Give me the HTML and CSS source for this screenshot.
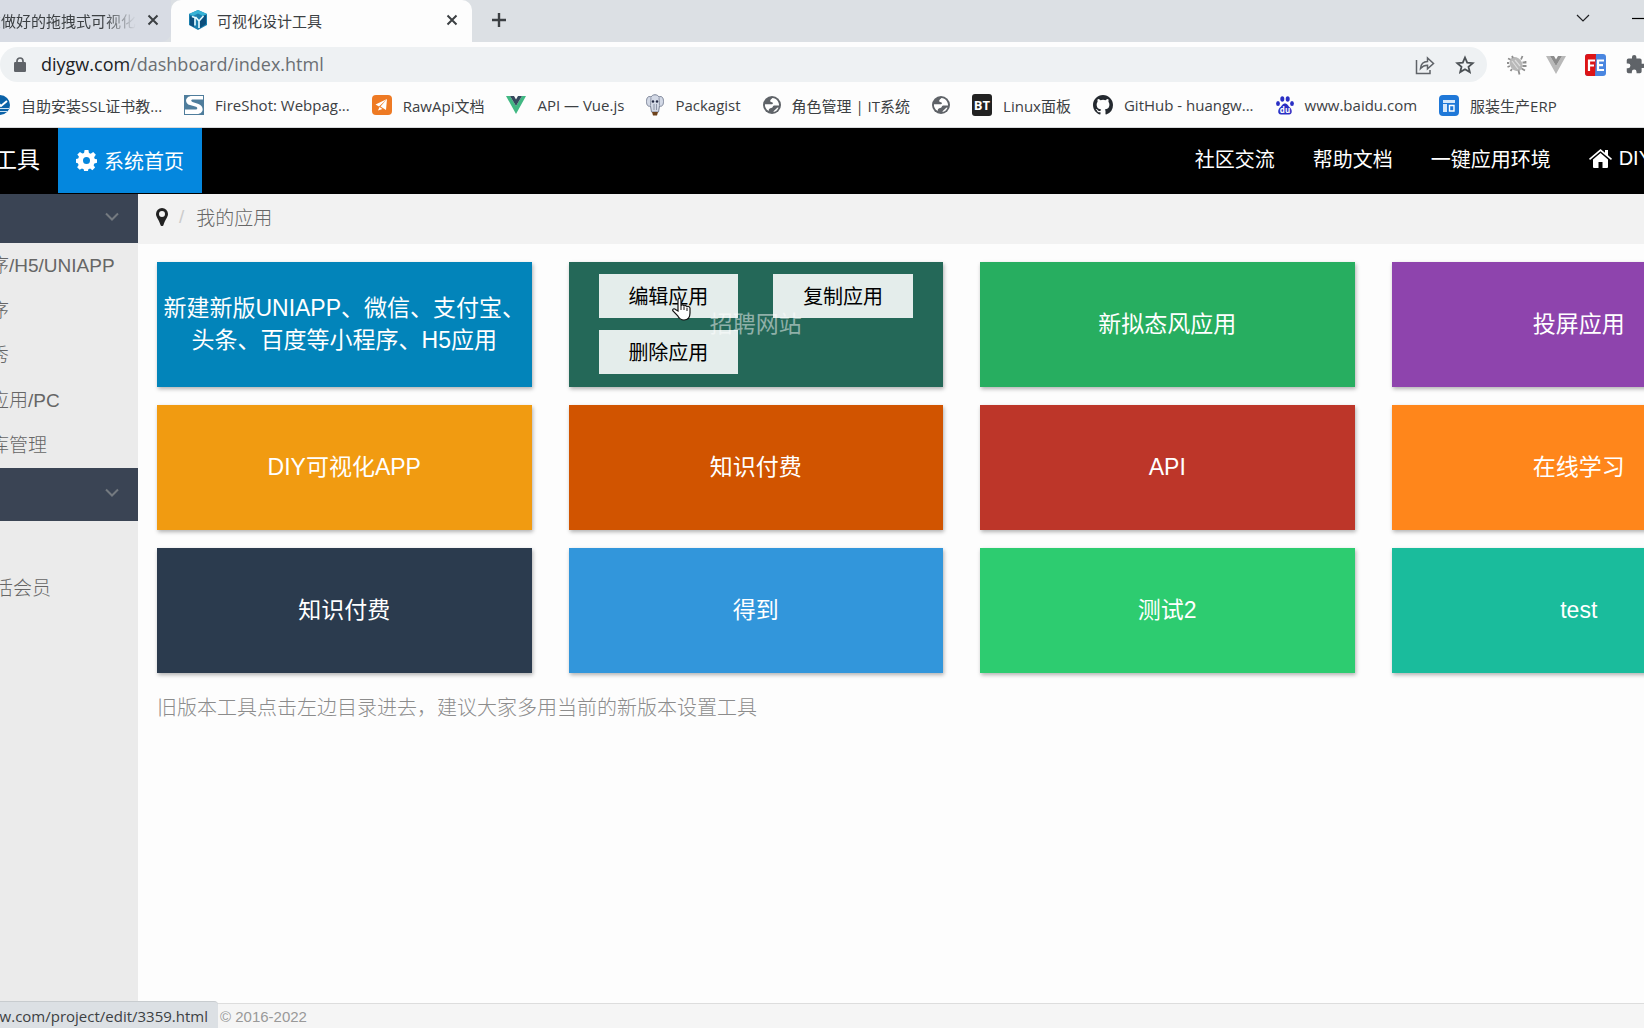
FILE: index.html
```html
<!DOCTYPE html>
<html lang="zh-CN">
<head>
<meta charset="utf-8">
<title>可视化设计工具</title>
<link rel="stylesheet" href="styles.css">
</head>
<body>
<svg class="defs" aria-hidden="true">
  <symbol id="cross" viewBox="0 0 12 12"><path d="M1.500 1.500l9 9M10.500 1.500l-9 9" stroke="#3c4043" stroke-width="2"/></symbol>
  <symbol id="globe" viewBox="0 0 20 20"><circle cx="10" cy="10" r="10" fill="#5f6368"/><path d="M10.500 2.200c-1 1.200-2.800 2.200-2.500 3.500.3 1.200 1.800.6 2.600 1.500.8 1 .4 1.600-.6 2H2.200C1.800 11.500 3 15 6.500 16.800c-.3-1.800.3-2.600 1.500-3.200 1.500-.7 2.700-.6 3-2 .3-1.200 1.700-1 3-1h3.800c.3-3.800-2.800-8.200-7.300-8.400zM11.500 17.800c3-.5 5-2.500 5.800-5-1.200.2-2 .4-2.600 1.400-.6 1-2.400 1.400-3.200 3.600z" fill="#fff"/></symbol>
  <symbol id="chevron" viewBox="0 0 14 10"><path d="M1 1.500l6 6 6-6" fill="none" stroke="currentColor" stroke-width="2"/></symbol>
</svg>

<header class="browser">
  <div class="tabs">
    <div class="tab tab-back">
      <span class="tab-title">在做好的拖拽式可视化</span>
      <button class="icon-btn" aria-label="关闭"><svg width="12" height="12"><use href="#cross"/></svg></button>
    </div>
    <div class="tab tab-front">
      <svg width="20" height="20" viewBox="0 0 20 20"><path d="M10 0l9 4v11l-9 5-9-5V4z" fill="#1b7fae"/><path d="M10 0l9 4-4 2-5-2.500L5 6 1 4z" fill="#36b3d6"/><path d="M2 6l4 2v9l-4-2zM12 11l3-5 3-1v9l-6 4z" fill="#0c4f7d"/><path d="M4 6.500l3 1v8M7.500 7L11 11M11 18v-7l4.500-5" stroke="#e8fbff" stroke-width="1.600" fill="none"/></svg>
      <span class="tab-title">可视化设计工具</span>
      <button class="icon-btn" aria-label="关闭"><svg width="12" height="12"><use href="#cross"/></svg></button>
    </div>
    <button class="icon-btn new-tab" aria-label="新标签页"><svg width="16" height="16" viewBox="0 0 16 16"><path d="M8 1v14M1 8h14" stroke="#3c4043" stroke-width="2.400"/></svg></button>
    <div class="window-btns">
      <button class="icon-btn" aria-label="搜索标签页"><svg width="14" height="9" viewBox="0 0 14 9"><path d="M1 1l6 6 6-6" fill="none" stroke="#202124" stroke-width="1.200"/></svg></button>
      <button class="icon-btn" aria-label="最小化"><svg width="14" height="9" viewBox="0 0 14 9"><path d="M0 4.500h14" stroke="#000" stroke-width="1.200"/></svg></button>
    </div>
  </div>

  <div class="toolbar">
    <div class="omnibox">
      <svg width="12" height="15" viewBox="0 0 12 15"><rect x="0" y="5" width="12" height="10" rx="1.200" fill="#5f6368"/><path d="M3 6V4a3 3 0 0 1 6 0v2" fill="none" stroke="#5f6368" stroke-width="1.700"/></svg>
      <span class="url"><b>diygw.com</b>/dashboard/index.html</span>
      <button class="icon-btn" aria-label="分享"><svg width="20" height="20" viewBox="0 0 20 20"><path d="M1.500 5v13.500H15V15M5.500 13.500c.5-5 3.500-7 7-7V3l6 5.500-6 5.300v-3.500c-3 0-5 1-7 3.200z" fill="none" stroke="#5f6368" stroke-width="1.500"/></svg></button>
      <button class="icon-btn" aria-label="添加书签"><svg width="20" height="20" viewBox="0 0 20 20"><path d="M10 2.500l2.200 5.100 5.500.5-4.200 3.600 1.300 5.400L10 14.200l-4.800 2.900 1.300-5.400L2.300 8.100l5.500-.5z" fill="none" stroke="#4b5054" stroke-width="1.800"/></svg></button>
    </div>
    <div class="extensions">
      <svg width="20" height="20" viewBox="0 0 20 20"><ellipse cx="9" cy="9" rx="6" ry="7.500" fill="#b8b8b8" transform="rotate(-35 9 9)"/><path d="M3.500 4.500L1 3.500M6 3L5 1M14 4.500l1.500-3.500M15.500 7.500h3V6M15.500 11h4M14.500 13.500l3.500 2M11.500 15.500l1 4M3 11l-2.500 1M5 14l-1.500 2M2 8H0" fill="none" stroke="#8e8e8e" stroke-width="1.800"/><path d="M5 6l6 8M8 5l5 6" stroke="#dcdcdc" stroke-width="1.200"/></svg>
      <svg width="20" height="18" viewBox="0 0 20 18"><path d="M0 0h4l6 10 6-10h4L10 18z" fill="#b9b9b9"/><path d="M4 0h4l2 3.500L12 0h4l-6 10z" fill="#8c8c8c"/></svg>
      <svg width="21" height="22" viewBox="0 0 21 22"><rect width="21" height="22" rx="3" fill="#4a86e0"/><path d="M3 0h8l-1 22H3a3 3 0 0 1-3-3V3a3 3 0 0 1 3-3z" fill="#dd1417"/><path d="M4 17V6.500h6M4 11.500h5M19 6.500h-6v9.500h6M13 11.200h5" fill="none" stroke="#fff" stroke-width="2.200"/></svg>
      <svg width="21" height="21" viewBox="0 0 24 24"><path d="M20.500 11H19V7a2 2 0 0 0-2-2h-4V3.500a2.500 2.500 0 0 0-5 0V5H4a2 2 0 0 0-2 2v3.800h1.500a2.700 2.700 0 0 1 0 5.400H2V20a2 2 0 0 0 2 2h3.800v-1.500a2.700 2.700 0 0 1 5.400 0V22H17a2 2 0 0 0 2-2v-4h1.500a2.500 2.500 0 0 0 0-5z" fill="#5f6368"/></svg>
    </div>
  </div>

  <nav class="bookmarks" aria-label="书签">
    <a href="#"><svg width="20" height="20" viewBox="0 0 20 20"><circle cx="10" cy="10" r="10" fill="#0b62a8"/><path d="M2 11l5-4 4 4 6-5" fill="none" stroke="#fff" stroke-width="2"/><path d="M1 13.500h18M2.500 16.500h15" stroke="#cfe3f2"/></svg>自助安装SSL证书教...</a>
    <a href="#"><svg width="20" height="20" viewBox="0 0 20 20"><path d="M0 0h20v20H0z" fill="#4f7d9c"/><path d="M19 1H8C1 1 0 8.500 6 10l6 1.800c2 .8 1.500 2.700-.5 2.700H1V19h12c7 0 7.500-8 1.500-10L8.500 7C6.500 6 7 4.500 9 4.500h10z" fill="#fff"/></svg>FireShot: Webpag...</a>
    <a href="#"><svg width="20" height="20" viewBox="0 0 20 20"><rect width="20" height="20" rx="4" fill="#ee7a24"/><path d="M15 4L3.500 9.500l3.500 2zM15 4L8.500 11.500l5.500 3.500zM6 15.500l1.500-3.500 3 2z" fill="#fff"/></svg>RawApi文档</a>
    <a href="#"><svg width="20" height="18" viewBox="0 0 20 18"><path d="M0 0h4l6 10 6-10h4L10 18z" fill="#41b883"/><path d="M4 0h4l2 3.500L12 0h4l-6 10z" fill="#35495e"/></svg>API — Vue.js</a>
    <a href="#"><svg width="18" height="22" viewBox="0 0 18 22"><path d="M5 3c1.500-3 6.500-3 8 0 3-1.500 4.500 1 4.500 4.500S16 13 13.500 12L12.500 18h-7L4.500 12C2 13 .5 11 .5 7.500S2 1.500 5 3z" fill="#d3d9e6" stroke="#7c8498"/><path d="M5 3.500l-.5 8M13 3.500l.5 8M8 10v6M10.500 10v6" stroke="#7c8498" stroke-width=".8"/><circle cx="7" cy="7.500" r="1.200" fill="#222a44"/><circle cx="11" cy="7.500" r="1.200" fill="#222a44"/><path d="M6 18h6l-1 3.500H7z" fill="#6e421c"/></svg>Packagist</a>
    <a href="#"><svg width="18" height="18"><use href="#globe"/></svg>角色管理 | IT系统</a>
    <a href="#" aria-label="网站"><svg width="18" height="18"><use href="#globe"/></svg></a>
    <a href="#"><svg width="20" height="22" viewBox="0 0 20 22"><rect width="20" height="22" rx="3" fill="#222"/><text x="10" y="16" text-anchor="middle" class="bt">BT</text></svg>Linux面板</a>
    <a href="#"><svg width="20" height="20" viewBox="0 0 16 16"><path fill="#24292f" d="M8 0C3.580 0 0 3.580 0 8c0 3.540 2.290 6.530 5.470 7.590.4.070.55-.17.55-.38 0-.19-.01-.82-.01-1.490-2.010.37-2.530-.49-2.690-.94-.09-.23-.48-.94-.82-1.130-.28-.15-.68-.52-.01-.53.63-.01 1.080.58 1.230.82.72 1.210 1.870.87 2.330.66.070-.52.28-.87.51-1.070-1.780-.2-3.640-.89-3.640-3.950 0-.87.31-1.590.82-2.150-.08-.2-.36-1.020.08-2.120 0 0 .67-.21 2.200.82a7.600 7.600 0 0 1 4 0c1.530-1.040 2.200-.82 2.200-.82.44 1.100.16 1.920.08 2.120.51.56.82 1.270.82 2.150 0 3.070-1.870 3.750-3.650 3.950.29.25.54.73.54 1.480 0 1.070-.01 1.930-.01 2.200 0 .21.15.46.55.38A8 8 0 0 0 16 8c0-4.420-3.580-8-8-8z"/></svg>GitHub - huangw...</a>
    <a href="#"><svg width="18" height="19" viewBox="0 0 18 19"><g fill="#2a2fc4"><ellipse cx="6.300" cy="3" rx="2" ry="2.800"/><ellipse cx="11.700" cy="3" rx="2" ry="2.800"/><ellipse cx="2" cy="7.500" rx="1.900" ry="2.500"/><ellipse cx="16" cy="7.500" rx="1.900" ry="2.500"/><path d="M9 7.500c2.500 0 3 2.500 5 4s3 7-1 7H5c-4 0-3-5.500-1-7s2.500-4 5-4z"/></g><text x="9" y="17" text-anchor="middle" class="du">du</text></svg>www.baidu.com</a>
    <a href="#"><svg width="20" height="21" viewBox="0 0 20 21"><rect width="20" height="21" rx="4" fill="#1f78d8"/><path d="M4 5h12v3H4zM4 9h4v8H4z" fill="#d6e8fb"/><path d="M10.500 10.500h4.500v5.500h-4.500z" fill="none" stroke="#fff" stroke-width="1.400"/></svg>服装生产ERP</a>
  </nav>
</header>

<nav class="topnav">
  <a class="brand" href="#">工具</a>
  <a class="current" href="#"><svg width="21" height="21" viewBox="0 0 24 24"><path fill="#fff" fill-rule="evenodd" d="M9.800 0h4.400l.6 3.400 2 .9L19.700 2.300l3 3.100-2 2.800.8 2 2.500.3v4.200l-3 .6-.9 2 1.700 2.600-3.100 3.100-2.600-1.800-2 .8-.6 3H9.400l-.6-3-2-.8L4.200 22.700 1.300 19.600 3 17l-.9-2-2.100-.5v-4.300l2.500-.5.9-2-1.900-2.600 3-2.900 2.700 1.800 2-.7zM12 8a4 4 0 1 0 0 8 4 4 0 0 0 0-8z"/></svg>系统首页</a>
  <div class="links">
    <a href="#">社区交流</a>
    <a href="#">帮助文档</a>
    <a href="#">一键应用环境</a>
    <a href="#"><svg width="23" height="19" viewBox="0 0 23 19"><path fill="#fff" d="M11.500 4L19 10.500V18a1 1 0 0 1-1 1h-4.500v-6h-4v6H5a1 1 0 0 1-1-1v-7.500zM11.500 0L16 3.700V1h3v5.300L23 9.800l-1 1.200L11.500 2.300 1 11 0 9.800z"/></svg>DIY</a>
  </div>
</nav>

<div class="layout">
  <aside class="sidebar">
    <button class="group-head" aria-label="展开"><svg width="14" height="10"><use href="#chevron"/></svg></button>
    <ul>
      <li><a href="#">序/H5/UNIAPP</a></li>
      <li><a href="#">序</a></li>
      <li><a href="#">秀</a></li>
      <li><a href="#">应用/PC</a></li>
      <li><a href="#">库管理</a></li>
    </ul>
    <button class="group-head group-head-tall" aria-label="展开"><svg width="14" height="10"><use href="#chevron"/></svg></button>
    <ul class="member">
      <li></li>
      <li><a href="#">活会员</a></li>
    </ul>
  </aside>

  <main class="main">
    <div class="crumbs">
      <svg width="12" height="18" viewBox="0 0 12 18"><path fill="#222" fill-rule="evenodd" d="M6 0a6 6 0 0 1 6 6c0 3-3 6-4.500 11a1.600 1.600 0 0 1-3 0C3 12 0 9 0 6a6 6 0 0 1 6-6zm0 3a3 3 0 1 0 0 6 3 3 0 0 0 0-6z"/></svg>
      <i>/</i><span>我的应用</span>
    </div>
    <div class="content">
      <div class="cards">
        <a class="card blue" href="#">新建新版UNIAPP、微信、支付宝、头条、百度等小程序、H5应用</a>
        <div class="card hovered">招聘网站
          <div class="actions">
            <button>编辑应用</button>
            <button>复制应用</button>
            <button>删除应用</button>
          </div>
          <svg class="pointer" width="19" height="24" viewBox="0 0 19 24"><path d="M6 14V3c0-2.500 3-2.500 3 0v6c0-1.500 3-1.500 3 .5 0-1.500 3-1 3 .8 0-1.500 3-1 3 1V16c0 4-2 7-6 7-3.500 0-5-1.500-6.500-4.500L1 14c-1-2 1-3 2.500-1.500z" fill="#fff" stroke="#111" stroke-width="1.200"/><path d="M9 9v4M12 10v3M15 11v3" stroke="#111"/></svg>
        </div>
        <a class="card green" href="#">新拟态风应用</a>
        <a class="card purple" href="#">投屏应用</a>
        <a class="card amber" href="#">DIY可视化APP</a>
        <a class="card rust" href="#">知识付费</a>
        <a class="card red" href="#">API</a>
        <a class="card orange" href="#">在线学习</a>
        <a class="card navy" href="#">知识付费</a>
        <a class="card sky" href="#">得到</a>
        <a class="card mint" href="#">测试2</a>
        <a class="card teal" href="#">test</a>
      </div>
      <p class="note">旧版本工具点击左边目录进去，建议大家多用当前的新版本设置工具</p>
    </div>
    <footer class="footer">© 2016-2022</footer>
  </main>
</div>
<div class="status"><span>w.com/project/edit/3359.html</span></div>
</body>
</html>
```

FILE: styles.css
```css
* { box-sizing: border-box; }

body {
  margin: 0;
  height: 100vh;
  display: flex;
  flex-direction: column;
  overflow: hidden;
  background: #fdfdfd;
  font-family: "Liberation Sans", "Noto Sans CJK SC", sans-serif;
  font-size: 20px;
  font-weight: 300;
}

a { color: inherit; text-decoration: none; }
button { font: inherit; border: 0; margin: 0; padding: 0; background: none; cursor: pointer; }
svg { display: block; flex: none; }
ul { list-style: none; margin: 0; padding: 0; }
.defs { position: absolute; width: 0; height: 0; }

/* Browser chrome */
.browser {
  flex: none;
  font-family: "Open Sans", "Noto Sans CJK SC", sans-serif;
  font-size: 15px;
  font-weight: 400;
  color: #3c4043;
  border-bottom: 1px solid #d8dadc;
}
.tabs { display: flex; height: 42px; background: #dce0e4; }
.tab { display: flex; align-items: center; padding-bottom: 2px; }
.tab-title { white-space: nowrap; overflow: hidden; }
.tab-back { width: 171px; padding-right: 12px; background: #d8dce4; border-bottom-right-radius: 10px; }
.tab-back .tab-title {
  flex: 1;
  margin-right: 11px;
  direction: rtl;
  -webkit-mask-image: linear-gradient(to left, transparent, #000 32px);
  mask-image: linear-gradient(to left, transparent, #000 32px);
}
.tab-front { width: 301px; padding-left: 17px; padding-right: 14px; gap: 9px; background: #fdfdfd; border-radius: 10px 10px 0 0; }
.tab-front .tab-title { flex: 1; }
.icon-btn { display: flex; align-items: center; justify-content: center; }
.new-tab { margin-left: 19px; padding-bottom: 2px; }
.window-btns { display: flex; gap: 42px; height: 36px; margin-left: auto; margin-right: -2px; }

.toolbar { display: flex; align-items: center; height: 45px; overflow: hidden; }
.omnibox {
  flex: 1;
  display: flex;
  align-items: center;
  height: 35px;
  padding: 0 12px 0 14px;
  background: #eef1f3;
  border-radius: 18px;
}
.url { flex: 1; margin-left: 15px; padding-bottom: 1px; font-size: 18px; color: #6b6f73; }
.url b { font-weight: 400; color: #202124; }
.omnibox .icon-btn { margin-left: 20px; }
.extensions { display: flex; align-items: center; gap: 19px; margin-left: 20px; margin-right: -2px; }

.bookmarks { display: flex; align-items: center; height: 40px; padding-bottom: 4px; gap: 22px; margin-left: -10px; white-space: nowrap; }
.bookmarks a { display: flex; align-items: center; gap: 11px; }
.bt { font: 700 13px "Open Sans", sans-serif; fill: #fff; }
.du { font: 700 8px "Open Sans", sans-serif; fill: #fff; }

/* Site navigation */
.topnav { flex: none; display: flex; height: 66px; background: #000; color: #fff; font-weight: 400; overflow: hidden; white-space: nowrap; border-bottom: 1px solid #000; }
.topnav a { display: flex; align-items: center; gap: 7px; padding: 0 18px; }
.topnav .brand { font-size: 23px; margin-left: -24px; padding-bottom: 5px; }
.topnav .current { background: #0487de; }
.links { display: flex; gap: 2px; margin-left: auto; margin-right: -26px; padding-bottom: 4px; }

.layout { flex: 1; display: flex; min-height: 0; }

/* Sidebar */
.sidebar { flex: none; width: 138px; background: #ebebeb; color: #666; font-size: 19px; overflow: hidden; }
.group-head { display: flex; align-items: center; justify-content: flex-end; width: 100%; height: 49px; padding: 0 19px 4px 0; background: #3a4454; color: #747a80; }
.group-head-tall { height: 53px; }
.sidebar li { height: 45px; line-height: 45px; margin-left: -10px; white-space: nowrap; }
.sidebar .member li { margin-left: -6px; }

/* Main column */
.main { flex: 1; min-width: 0; display: flex; flex-direction: column; overflow: hidden; }
.crumbs { display: flex; align-items: center; height: 50px; padding: 0 18px 5px; background: #f2f2f2; font-size: 19px; color: #666; }
.crumbs i { margin: 0 12px 0 11px; font-style: normal; color: #ccc; }
.content { flex: 1; padding: 18px 19px; }
.cards {
  display: grid;
  grid-template-columns: repeat(4, 1fr);
  grid-auto-rows: 125px;
  gap: 18px 37px;
  width: calc(100% + 141px);
}
.card {
  position: relative;
  display: flex;
  align-items: center;
  justify-content: center;
  padding: 0 4px 2px;
  font-size: 23px;
  font-weight: 400;
  line-height: 32px;
  color: #fff;
  text-align: center;
  box-shadow: 1px 2px 4px rgba(0, 0, 0, .3);
}
.blue { background: #0284ba; }
.green { background: #27ae60; }
.purple { background: #8e44ad; }
.amber { background: #f19b11; }
.rust { background: #d15400; }
.red { background: #bd3629; }
.orange { background: #ff861b; }
.navy { background: #2b3b4e; }
.sky { background: #3296db; }
.mint { background: #2dcc70; }
.teal { background: #1abc9c; }
.hovered { background: #246858; color: #8fb0a8; }
.actions {
  position: absolute;
  inset: 0;
  display: grid;
  grid-template-columns: 1fr 1fr;
  grid-auto-rows: 44px;
  gap: 12px 35px;
  padding: 12px 30px;
}
.actions button { padding-top: 2px; background: rgba(255, 255, 255, .88); color: #000; font-size: 20px; }
.pointer { position: absolute; left: 103px; top: 35px; }
.note { margin: 20px 0; font-size: 20px; line-height: 30px; color: #8c8c8c; }
.footer { height: 25px; padding-left: 82px; border-top: 1px solid #ddd; background: #f5f5f5; color: #999; font-size: 15px; line-height: 26px; }

/* Link target shown over the page's lower left corner */
.status {
  position: absolute;
  left: 0;
  bottom: 0;
  width: 218px;
  height: 27px;
  padding-right: 10px;
  display: flex;
  justify-content: flex-end;
  overflow: hidden;
  background: #dce0e4;
  border-top: 1px solid #c8cccf;
  border-top-right-radius: 4px;
  color: #3c4043;
  font: 400 15px/28px "Open Sans", sans-serif;
}
```
